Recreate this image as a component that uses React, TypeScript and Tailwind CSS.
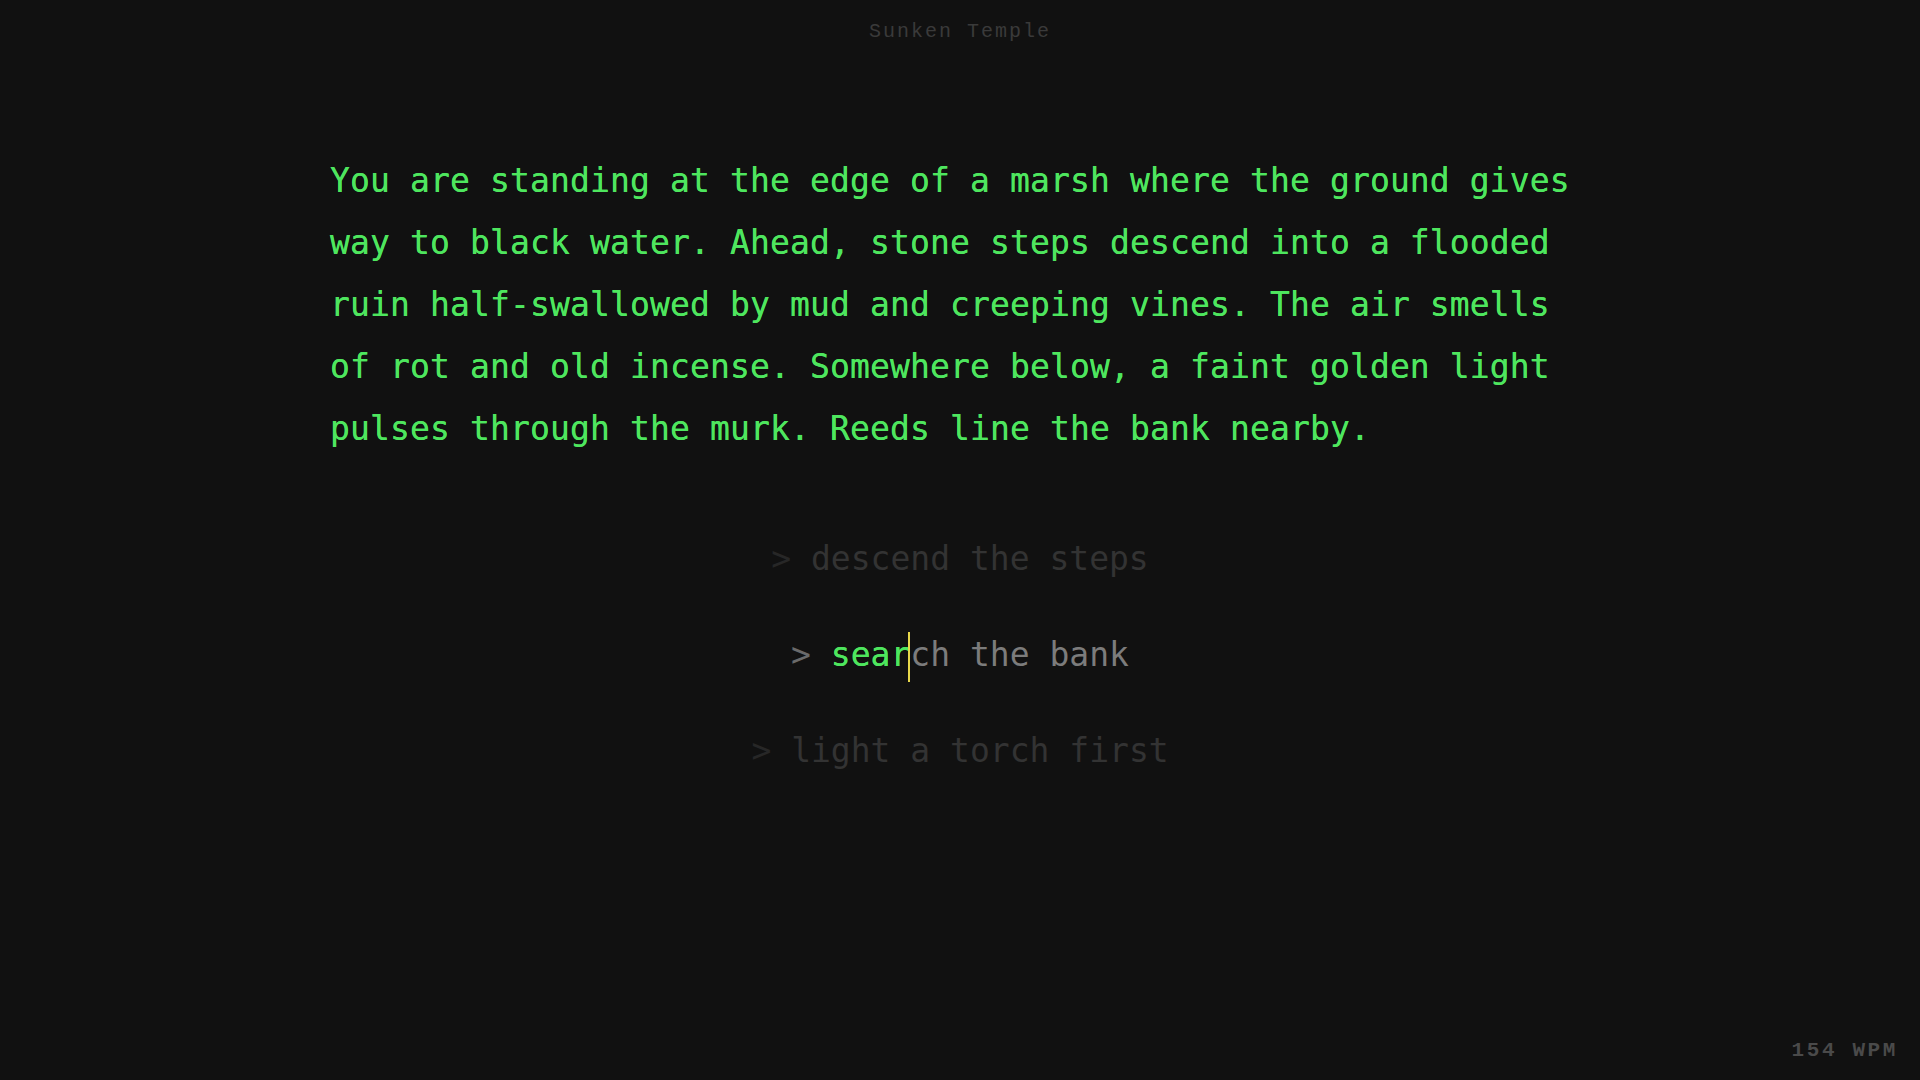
const story =
  "You are standing at the edge of a marsh where the ground gives way to black water. Ahead, stone steps descend into a flooded ruin half-swallowed by mud and creeping vines. The air smells of rot and old incense. Somewhere below, a faint golden light pulses through the murk. Reeds line the bank nearby.";

const mono = "font-['DejaVu_Sans_Mono','Liberation_Mono',monospace]";
const pixel = "font-['Liberation_Mono','DejaVu_Sans_Mono',monospace]";

function DimChoice({ text }: { text: string }) {
  return (
    <div className="h-[48px] leading-[48px] whitespace-pre">
      <span className="text-[#272727]">{"> "}</span>
      <span className="text-[#333333]">{text}</span>
    </div>
  );
}

function ActiveChoice({ typed, rest }: { typed: string; rest: string }) {
  return (
    <div className="h-[48px] leading-[48px] whitespace-pre">
      <span className="text-[#6a6a6a]">{"> "}</span>
      <span className="text-[#4ee65e] [text-shadow:0_0_0.4px_#4ee65e]">{typed}</span>
      <span className="relative text-[#7c7c7c]">
        <span className="absolute left-[-2px] top-[-3px] h-[50px] w-[2px] bg-[#e8d84a]" />
        {rest}
      </span>
    </div>
  );
}

export default function App() {
  return (
    <div className="flex h-screen w-full flex-col bg-[#111111]">
      <header
        className={`${pixel} pt-[18px] text-center text-[20px] leading-[28px] tracking-[2px] text-[#3a3a3a]`}
      >
        Sunken Temple
      </header>

      <main className={`${mono} flex flex-col items-center`}>
        <p className="mt-[104px] w-[1260px] text-[33px] leading-[62px] tracking-[0.13px] text-[#4ee65e] [text-shadow:0_0_0.4px_#4ee65e]">
          {story}
        </p>

        <div className="mt-[75px] flex flex-col items-center gap-[48px] text-[33px]">
          <DimChoice text="descend the steps" />
          <ActiveChoice typed="sear" rest="ch the bank" />
          <DimChoice text="light a torch first" />
        </div>
      </main>

      <footer
        className={`${pixel} mt-auto flex justify-end pb-[15px] pr-[22px] text-[21px] font-bold leading-[28px] tracking-[2.6px] text-[#4a4a4a]`}
      >
        154 WPM
      </footer>
    </div>
  );
}
